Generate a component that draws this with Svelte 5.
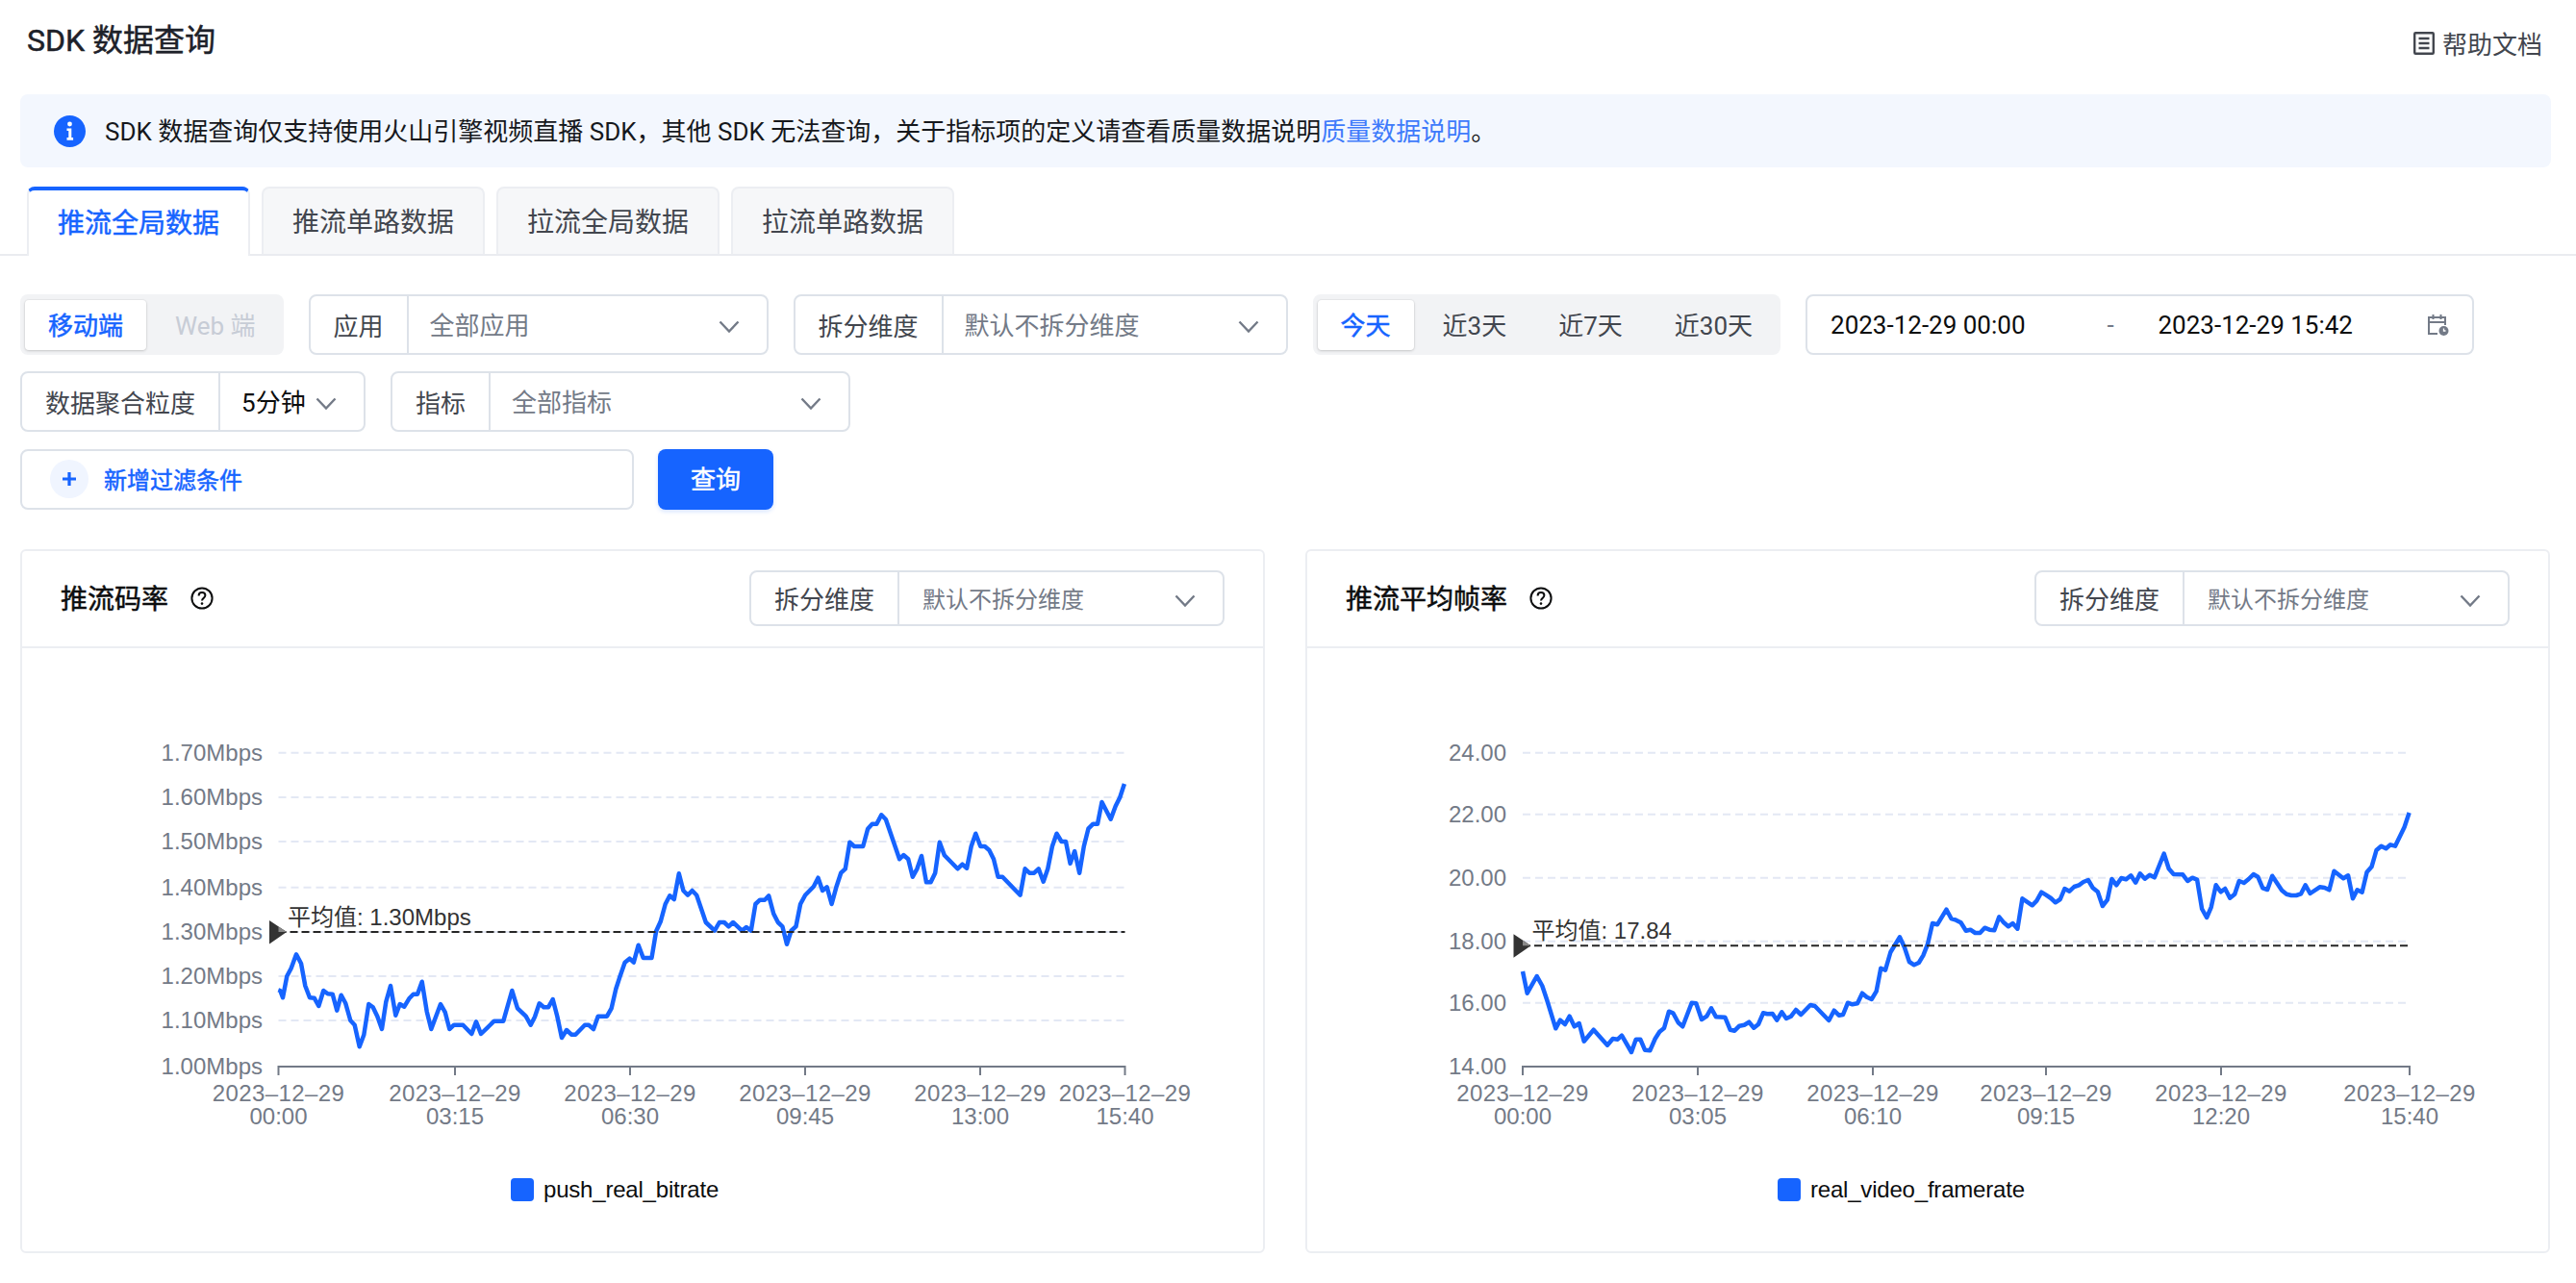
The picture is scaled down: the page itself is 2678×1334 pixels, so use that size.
<script>
  // Traced series: pixel samples of the two curves, [x, y] in zoomed-crop units
  const traceA1 = [478,868,484,870,492,892,505,825,518,800,534,757,549,785,562,855,576,892,590,893,604,918,619,870,632,880,647,881,661,932,674,884,688,910,703,963,716,977,731,1045,745,1008,760,912,773,922,787,950,801,990,814,905,828,855,844,947,857,912,871,920,886,895,899,881,912,881,926,842,941,935,955,990,984,912,998,937,1012,990,1026,977,1054,977,1081,1005,1095,967,1110,1005,1151,965,1180,965,1207,870,1224,925,1250,950,1265,977,1278,952,1292,910,1306,922,1320,922,1334,897,1348,950,1362,1017,1377,993,1392,1007,1405,1007,1434,977,1446,977,1461,990,1475,950,1503,950,1517,925,1531,865];
  const traceA2 = [12,825,25,782,38,770,49,782,62,728,75,768,98,768,110,685,122,655,135,600,147,574,159,585,172,505,184,558,196,572,208,558,220,572,245,657,269,683,282,657,295,657,307,670,319,657,343,683,355,672,368,683,380,600,392,587,405,587,416,574,429,630,441,657,453,670,465,725,477,683,490,670,502,600,515,572,538,545,550,518,562,558,574,547,587,600,600,545,612,503,624,490,636,407,648,420,672,420,685,365,697,350,709,350,722,322,734,336,771,460,782,447,795,460,807,515,819,490,831,450,844,532,856,532,868,503,880,407,893,448,929,490,942,476,954,488,966,420,978,380,991,420,1003,420,1015,432,1027,460,1039,515,1051,515,1099,572,1112,490,1124,503,1137,503,1149,490,1162,530,1174,490,1186,420,1198,380,1211,405,1223,405,1235,473,1247,435,1260,503,1272,420,1284,365,1297,350,1309,350,1321,282,1345,335,1358,295,1370,267,1382,225];
  const traceB1 = [399,810,413,878,443,825,460,855,475,900,502,988,516,962,531,975,545,950,560,982,575,972,590,1028,620,992,663,1040,680,1020,695,1022,708,1010,738,1062,752,1022,766,1022,780,1055,796,1057,812,1020,826,998,840,987,855,935,868,940,884,970,898,982,912,945,926,908,940,910,957,960,973,950,987,925,1002,952,1030,953,1046,992,1060,995,1075,980,1090,977,1105,968,1120,986,1134,975,1149,940,1162,943,1178,942,1192,962,1207,937,1221,957,1236,950,1251,930,1267,945,1296,915,1310,918,1354,963,1370,932,1385,947,1398,945,1413,908,1427,913,1443,910,1458,878,1472,890,1487,897,1502,872,1516,800,1530,806];
  const traceB2 = [14,750,39,703,52,735,65,780,78,790,91,783,103,760,115,725,128,660,141,664,166,617,179,645,192,650,205,658,219,683,231,680,244,690,257,690,270,674,283,680,296,682,309,640,322,658,334,670,346,660,359,677,372,583,399,604,411,590,424,563,437,572,450,582,462,595,475,585,487,552,500,560,513,546,526,541,538,531,551,525,564,550,577,562,590,606,603,587,615,522,628,541,641,519,654,523,667,511,680,533,692,505,705,521,718,509,731,517,744,480,757,443,770,490,783,507,808,508,821,528,834,518,847,524,860,615,873,642,885,610,898,541,911,562,923,552,936,581,949,569,961,528,974,534,987,522,1000,507,1012,515,1025,550,1038,555,1051,512,1077,557,1090,569,1103,573,1116,573,1129,568,1141,541,1154,567,1180,547,1193,549,1206,556,1219,497,1244,520,1257,511,1270,583,1282,556,1295,563,1308,500,1321,484,1334,432,1347,419,1360,427,1372,415,1385,419,1410,360,1423,315];

  function toPoints(trace, ox, sx) {
    const out = [];
    for (let i = 0; i < trace.length; i += 2) {
      out.push(`${(ox + trace[i] / sx).toFixed(1)},${(740 + trace[i + 1] / 3).toFixed(1)}`);
    }
    return out.join(' ');
  }

  const charts = [
    {
      title: '推流码率',
      box: '23 674 1290 627',
      x0: 289.5, x1: 1169.5, labelX: 273,
      yTicks: [
        ['1.70Mbps', 782.7], ['1.60Mbps', 829], ['1.50Mbps', 875], ['1.40Mbps', 922.7],
        ['1.30Mbps', 969], ['1.20Mbps', 1015], ['1.10Mbps', 1061], ['1.00Mbps', 1109]
      ],
      xTicks: [[289.5, '00:00'], [473, '03:15'], [655, '06:30'], [837, '09:45'], [1019, '13:00'], [1169.5, '15:40']],
      avg: 969,
      avgText: '平均值: 1.30Mbps',
      line: toPoints(traceA1, 130, 3) + ' ' + toPoints(traceA2, 640, 2.613),
      legend: 'push_real_bitrate',
      legendX: 531
    },
    {
      title: '推流平均帧率',
      box: '1359 674 1290 627',
      x0: 1583, x1: 2505, labelX: 1566,
      yTicks: [['24.00', 782.7], ['22.00', 846.7], ['20.00', 912.7], ['18.00', 978.7], ['16.00', 1042.7], ['14.00', 1109]],
      xTicks: [[1583, '00:00'], [1765, '03:05'], [1947, '06:10'], [2127, '09:15'], [2309, '12:20'], [2505, '15:40']],
      avg: 983.3,
      avgText: '平均值: 17.84',
      line: toPoints(traceB1, 1450, 3) + ' ' + toPoints(traceB2, 1960, 2.613),
      legend: 'real_video_framerate',
      legendX: 1848
    }
  ];

  const ranges = ['今天', '近3天', '近7天', '近30天'];
  const tabs = ['推流全局数据', '推流单路数据', '拉流全局数据', '拉流单路数据'];
</script>

{#snippet chevron()}
  <svg class="chevron" width="22" height="13" viewBox="0 0 22 13" fill="none">
    <path d="M1.5 1.5 L11 11.5 L20.5 1.5" stroke="#737a87" stroke-width="2.4" />
  </svg>
{/snippet}

<div class="page">
  <header class="top">
    <h1>SDK 数据查询</h1>
    <a class="help">
      <svg width="24" height="24" viewBox="0 0 24 24" fill="none" stroke="#42464e" stroke-width="2.4">
        <rect x="2.2" y="1.2" width="19.6" height="21.6" rx="1" />
        <path d="M6.5 7h11M6.5 12h11M6.5 17h11" />
      </svg>
      <span>帮助文档</span>
    </a>
  </header>

  <div class="alert">
    <svg width="33" height="33" viewBox="0 0 33 33">
      <circle cx="16.5" cy="16.5" r="16.5" fill="#1664ff" />
      <circle cx="16.5" cy="9" r="2.4" fill="#fff" />
      <path d="M13.5 13.5h4.8v9.6h1.8v2.6h-6.6v-2.6h1.8v-7h-1.8z" fill="#fff" />
    </svg>
    <p>SDK 数据查询仅支持使用火山引擎视频直播 SDK，其他 SDK 无法查询，关于指标项的定义请查看质量数据说明<a>质量数据说明</a>。</p>
  </div>

  <nav class="tabs">
    {#each tabs as tab, i}
      <div class="tab" class:active={i === 0}>{tab}</div>
    {/each}
  </nav>

  <section class="filters">
    <div class="filter-row">
      <div class="seg">
        <span class="seg-item on">移动端</span>
        <span class="seg-item off">Web 端</span>
      </div>
      <div class="select w478">
        <span class="select-label">应用</span>
        <span class="select-value">全部应用</span>
        {@render chevron()}
      </div>
      <div class="select w514">
        <span class="select-label">拆分维度</span>
        <span class="select-value">默认不拆分维度</span>
        {@render chevron()}
      </div>
      <div class="seg">
        {#each ranges as r, i}
          <span class="seg-item" class:on={i === 0}>{r}</span>
        {/each}
      </div>
      <div class="date">
        <span>2023-12-29 00:00</span>
        <i class="date-sep">-</i>
        <span>2023-12-29 15:42</span>
        <svg width="24" height="24" viewBox="0 0 24 24" fill="none" stroke="#737a87" stroke-width="2">
          <path d="M12 21H3V4h17v8M3 9h17M7.5 1v5M15.5 1v5" />
          <circle cx="18.5" cy="18" r="5" fill="#737a87" stroke="none" />
          <path d="M18.5 15.5V18h2" stroke="#fff" stroke-width="1.3" />
        </svg>
      </div>
    </div>
    <div class="filter-row">
      <div class="select w359">
        <span class="select-label">数据聚合粒度</span>
        <span class="select-value dark">5分钟</span>
        {@render chevron()}
      </div>
      <div class="select w478">
        <span class="select-label">指标</span>
        <span class="select-value">全部指标</span>
        {@render chevron()}
      </div>
    </div>
    <div class="filter-row">
      <div class="add-filter">
        <span class="plus">
          <svg width="16" height="16" viewBox="0 0 16 16"><path d="M8 1v14M1 8h14" stroke="#1664ff" stroke-width="3.2" /></svg>
        </span>
        <span class="add-text">新增过滤条件</span>
      </div>
      <button type="button" class="query">查询</button>
    </div>
  </section>

  <section class="cards">
    {#each charts as c}
      <article class="card">
        <div class="card-head">
          <div class="card-title">
            <span>{c.title}</span>
            <svg width="24" height="24" viewBox="0 0 24 24" fill="none" stroke="#0c0d0e" stroke-width="2">
              <circle cx="12" cy="12" r="10.6" />
              <path d="M8.6 9.4c0-2 1.5-3.3 3.4-3.3s3.4 1.2 3.4 3c0 2.9-3.4 2.6-3.4 5.4" />
              <circle cx="12" cy="17.6" r="1.3" fill="#0c0d0e" stroke="none" />
            </svg>
          </div>
          <div class="select w494">
            <span class="select-label">拆分维度</span>
            <span class="select-value small">默认不拆分维度</span>
            {@render chevron()}
          </div>
        </div>
        <svg class="plot" viewBox={c.box} width="1290" height="627">
          {#each c.yTicks as [label, y], i}
            {#if i < c.yTicks.length - 1}
              <line x1={c.x0} x2={c.x1} y1={y} y2={y} stroke="#e3e8f4" stroke-width="2" stroke-dasharray="8 5" />
            {/if}
            <text class="tick" x={c.labelX} y={y + 8} text-anchor="end">{label}</text>
          {/each}

          <line x1={c.x0} x2={c.x1} y1="1109" y2="1109" stroke="#737a87" stroke-width="2" />
          {#each c.xTicks as [x, time]}
            <line x1={x} x2={x} y1="1108" y2="1118" stroke="#737a87" stroke-width="2" />
            <text class="tick date-tick" x={x} y="1145" text-anchor="middle">2023–12–29</text>
            <text class="tick" x={x} y="1169" text-anchor="middle">{time}</text>
          {/each}

          <polyline points={c.line} fill="none" stroke="#1664ff" stroke-width="4.5" stroke-linejoin="round" />

          <line x1={c.x0} x2={c.x1} y1={c.avg} y2={c.avg} stroke="#262626" stroke-width="2" stroke-dasharray="8 4" />
          <polygon points={`${c.x0 - 9.5},${c.avg - 12} ${c.x0 + 8.5},${c.avg} ${c.x0 - 9.5},${c.avg + 12.5}`} fill="#333" />
          <polygon points={`${c.x0},${c.avg - 5.5} ${c.x0 + 8.5},${c.avg} ${c.x0},${c.avg}`} fill="#888" />
          <text class="avg" x={c.x0 + 9.5} y={c.avg - 7}>{c.avgText}</text>

          <rect x={c.legendX} y="1225" width="24" height="24" rx="4" fill="#1664ff" />
          <text class="legend" x={c.legendX + 34} y="1245">{c.legend}</text>
        </svg>
      </article>
    {/each}
  </section>
</div>

<style>
  :global(body) { margin: 0; background: #fff; }
  .page {
    width: 2678px;
    height: 1334px;
    overflow: hidden;
    font-family: Roboto, "Noto Sans CJK SC", sans-serif;
    font-size: 26px;
    color: #0c0d0e;
  }

  /* no medium cut of the CJK face here, so medium text is regular plus a thin stroke */
  h1, .tab.active, .seg-item.on, .add-filter, .query, .card-title { font-weight: 400; -webkit-text-stroke: .5px currentColor; }

  .top { display: flex; justify-content: space-between; align-items: center; height: 98px; padding: 0 35px 14px 28px; box-sizing: border-box; }
  h1 { margin: 0; font-size: 32px; color: #1d2129; line-height: 1; }
  .help { display: flex; align-items: center; gap: 7px; color: #42464e; padding-top: 6px; }
  .help span { padding-bottom: 2px; }

  .alert {
    display: flex; align-items: center; gap: 20px;
    height: 76px; margin: 0 26px 0 21px; padding-left: 35px;
    background: #f3f7fe; border-radius: 8px;
  }
  .alert p { margin: 0; padding-bottom: 3px; color: #16181c; }
  .alert a { color: #3f7bfb; }

  .tabs { display: flex; gap: 12px; height: 70px; margin-top: 20px; padding-left: 28px; border-bottom: 2px solid #eaecf0; }
  .tab {
    width: 232px; height: 70px; box-sizing: border-box; padding-bottom: 2px;
    display: flex; align-items: center; justify-content: center;
    font-size: 28px; color: #42464e;
    background: #f6f7f9; border: 2px solid #eceef2; border-bottom: 0;
    border-radius: 8px 8px 0 0;
  }
  .tab.active {
    height: 72px; background: #fff; color: #1664ff;
    border-top: 4px solid #1664ff; padding-bottom: 4px;
  }

  .filters { display: flex; flex-direction: column; gap: 17.4px; margin-top: 40px; padding-left: 21px; }
  .filter-row { display: flex; gap: 26px; }

  .seg { display: flex; align-items: center; gap: 6px; height: 63px; padding: 0 5px; background: #f2f3f5; border-radius: 8px; }
  .seg-item { display: flex; align-items: center; height: 52px; box-sizing: border-box; padding: 0 24px 2px; color: #42464e; border-radius: 4px; }
  .seg-item.on { background: #fff; color: #1664ff; box-shadow: 0 1px 3px rgba(0, 0, 0, .16), 0 0 0 1px rgba(0, 0, 0, .03); }
  .seg-item.off { color: #c7ccd6; }

  .select {
    display: flex; align-items: center; height: 63px; box-sizing: border-box;
    border: 2px solid #dde2e9; border-radius: 8px; background: #fff;
  }
  .w359 { width: 359px; }
  .w478 { width: 478px; }
  .w494 { width: 494px; height: 58px; }
  .w514 { width: 514px; }
  .select-label { display: flex; align-items: center; height: 100%; box-sizing: border-box; padding: 0 24px 1px; border-right: 2px solid #dde2e9; color: #42464e; }
  .select-value { padding: 0 0 2px 22px; color: #737a87; }
  .select-value.dark { color: #0c0d0e; }
  .select-value.small { font-size: 24px; padding-left: 24px; }
  .chevron { margin-left: auto; margin-right: 28px; margin-top: 4px; }

  .date {
    display: flex; align-items: center; width: 695px; height: 63px; box-sizing: border-box;
    padding: 0 24px; border: 2px solid #dde2e9; border-radius: 8px; white-space: nowrap;
  }
  .date-sep { margin: 0 44px 0 85px; width: 9px; font-style: normal; color: #737a87; }
  .date svg { margin-left: auto; }

  .add-filter {
    display: flex; align-items: center; gap: 16px;
    width: 638px; height: 63px; box-sizing: border-box; padding-left: 29px;
    border: 2px solid #dde2e9; border-radius: 8px;
    font-size: 24px; color: #1664ff;
  }
  .add-text { padding-bottom: 2px; }
  .plus { display: flex; align-items: center; justify-content: center; width: 40px; height: 40px; border-radius: 50%; background: #f0f5ff; }
  .query {
    width: 120px; height: 63px; margin-left: -1px; padding: 0 0 3px; border: 0; border-radius: 8px;
    background: #1664ff; color: #fff; font-family: inherit; font-size: 26px;
    box-shadow: 0 2px 4px rgba(22, 100, 255, .18);
  }

  .cards { display: grid; grid-template-columns: 1294px 1294px; column-gap: 42px; margin-top: 41px; padding-left: 21px; }
  .card { height: 732px; box-sizing: border-box; border: 2px solid #eceef2; border-radius: 6px; overflow: hidden; }
  .card-head { display: flex; justify-content: space-between; align-items: center; height: 101px; box-sizing: border-box; padding: 0 40px; border-bottom: 2px solid #eceef2; }
  .card-title { display: flex; align-items: center; gap: 23px; font-size: 28px; }
  .card-title span { padding-bottom: 2px; }
  .plot { display: block; }

  .plot text { font-family: "Liberation Sans", "Noto Sans CJK SC", sans-serif; font-size: 24px; }
  .plot .tick { fill: #737a87; }
  .plot .date-tick { letter-spacing: .4px; }
  .plot .avg { fill: #333; }
  .plot .legend { fill: #0c0d0e; letter-spacing: -.2px; }
</style>
